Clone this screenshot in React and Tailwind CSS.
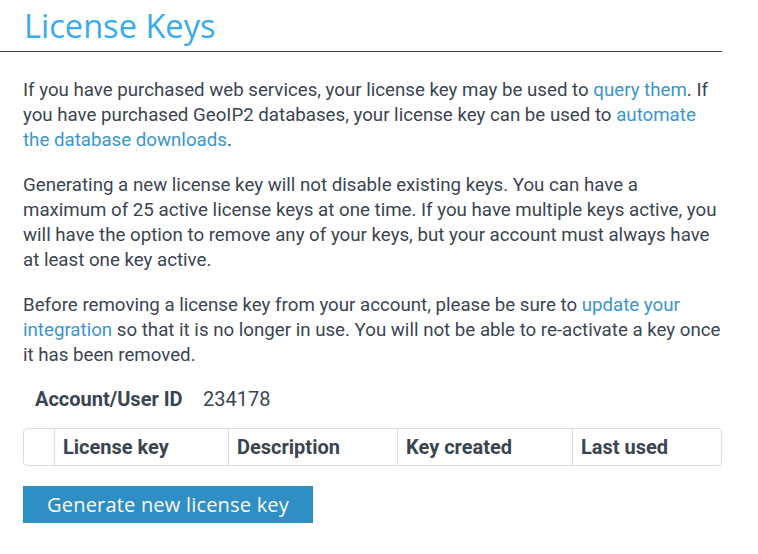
import React from 'react';

const links = 'text-[#3a95cf]';

const headers = ['License key', 'Description', 'Key created', 'Last used'];

export default function App() {
  return (
    <div className="w-[722px] bg-white text-[#3b4552] font-['Roboto',sans-serif] text-[18.7px] leading-[25px]">
      <h1 className="border-b border-[#3b4552] pl-6 pt-[7px] pb-[6px] font-['Open_Sans',sans-serif] text-[32.6px] leading-[38px] text-[#3aaaf0]">
        License Keys
      </h1>

      <div className="pl-[23px] pt-[26px]">
        <p>
          If you have purchased web services, your license key may be used to{' '}
          <a className={links}>query them</a>. If you have purchased GeoIP2 databases, your license key can be used to{' '}
          <a className={links}>automate the database downloads</a>.
        </p>
        <p className="mt-[20px]">
          Generating a new license key will not disable existing keys. You can have a maximum of 25 active license keys at one time. If you have multiple keys active, you will have the option to remove any of your keys, but your account must always have at least one key active.
        </p>
        <p className="mt-[20px]">
          Before removing a license key from your account, please be sure to{' '}
          <a className={links}>update your integration</a> so that it is no longer in use. You will not be able to re-activate a key once it has been removed.
        </p>

        <div className="mt-[13px] flex items-center pl-3 h-[36px] text-[20px]">
          <span className="font-bold w-[168px]">Account/User ID</span>
          <span>234178</span>
        </div>

        <div className="mt-[11px] flex h-[38px] rounded border border-[#dddddd] text-[20px] font-bold">
          <div className="w-[31px] border-r border-[#dddddd]" />
          <div className="w-[174px] border-r border-[#dddddd] flex items-center px-2">{headers[0]}</div>
          <div className="w-[169px] border-r border-[#dddddd] flex items-center px-2">{headers[1]}</div>
          <div className="w-[175px] border-r border-[#dddddd] flex items-center px-2">{headers[2]}</div>
          <div className="flex-1 flex items-center px-2">{headers[3]}</div>
        </div>

        <button className="mt-[20px] h-[37px] w-[290px] bg-[#2f8fc4] text-[#fdf8ec] font-['Open_Sans',sans-serif] text-[20px] tracking-[0.2px]">
          Generate new license key
        </button>
      </div>
    </div>
  );
}
